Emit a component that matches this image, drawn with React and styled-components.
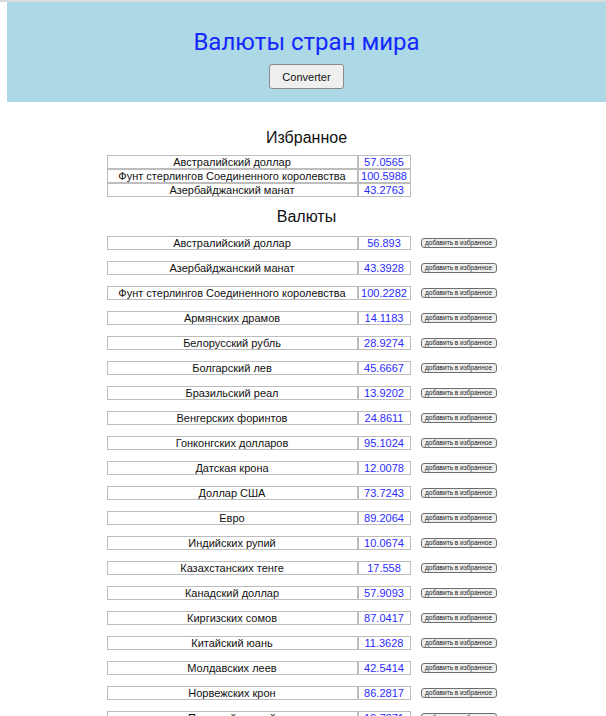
import React from "react";
import styled, { createGlobalStyle } from "styled-components";

const GlobalStyle = createGlobalStyle`
  html, body {
    margin: 0;
    background: #fff;
  }
  body {
    border-top: 2px solid #dcdcdc;
    padding-left: 7px;
    font-family: "Liberation Sans", Arial, sans-serif;
  }
`;

const Header = styled.header`
  background-color: #add8e6;
  height: 100px;
  padding-top: 26px;
  box-sizing: border-box;
  display: flex;
  flex-direction: column;
  align-items: center;
`;

const Title = styled.h1`
  margin: 0;
  font-family: Roboto, "Liberation Sans", sans-serif;
  font-weight: 400;
  font-size: 24px;
  line-height: 28px;
  color: #1428ff;
`;

const ConverterButton = styled.button`
  margin-top: 8px;
  width: 75px;
  height: 25px;
  font-family: "Liberation Sans", Arial, sans-serif;
  font-size: 11px;
  color: #111;
  background: #efefef;
  border: 1px solid #8a8a8a;
  border-radius: 3px;
  padding: 0;
`;

const Main = styled.main`
  display: flex;
  flex-direction: column;
  align-items: center;
  padding-top: 26px;
`;

const Heading = styled.h2`
  margin: ${(p) => (p.$first ? "0 0 7px" : "10px 0 9px")};
  font-weight: 400;
  font-size: 16px;
  line-height: 20px;
  color: #111;
`;

const Column = styled.div`
  width: 400px;
`;

const Table = styled.table`
  border-collapse: separate;
  border-spacing: 0;
  font-size: 11px;
`;

const NameCell = styled.td`
  width: 249px;
  height: 12px;
  padding: 0;
  border: 1px solid #bdbdbd;
  text-align: center;
  line-height: 12px;
  color: #111;
`;

const ValueCell = styled.td`
  width: 51px;
  height: 12px;
  padding: 0;
  border: 1px solid #bdbdbd;
  text-align: center;
  line-height: 12px;
  color: #2a2aff;
`;

const CurrencyRow = styled.div`
  display: flex;
  align-items: center;
  gap: 10px;
  margin-bottom: 11px;
`;

const AddButton = styled.button`
  width: 76px;
  height: 10px;
  padding: 0;
  font-family: "Liberation Sans", Arial, sans-serif;
  font-size: 6.5px;
  line-height: 8px;
  color: #222;
  background: #efefef;
  border: 1px solid #6e6e6e;
  border-radius: 3px;
  white-space: nowrap;
  overflow: hidden;
`;

const favorites = [
  ["Австралийский доллар", "57.0565"],
  ["Фунт стерлингов Соединенного королевства", "100.5988"],
  ["Азербайджанский манат", "43.2763"],
];

const currencies = [
  ["Австралийский доллар", "56.893"],
  ["Азербайджанский манат", "43.3928"],
  ["Фунт стерлингов Соединенного королевства", "100.2282"],
  ["Армянских драмов", "14.1183"],
  ["Белорусский рубль", "28.9274"],
  ["Болгарский лев", "45.6667"],
  ["Бразильский реал", "13.9202"],
  ["Венгерских форинтов", "24.8611"],
  ["Гонконгских долларов", "95.1024"],
  ["Датская крона", "12.0078"],
  ["Доллар США", "73.7243"],
  ["Евро", "89.2064"],
  ["Индийских рупий", "10.0674"],
  ["Казахстанских тенге", "17.558"],
  ["Канадский доллар", "57.9093"],
  ["Киргизских сомов", "87.0417"],
  ["Китайский юань", "11.3628"],
  ["Молдавских леев", "42.5414"],
  ["Норвежских крон", "86.2817"],
  ["Польский злотый", "19.7871"],
  ["Румынский лей", "18.0536"],
  ["СДР (специальные права заимствования)", "105.0719"],
];

export default function App() {
  return (
    <>
      <GlobalStyle />
      <Header>
        <Title>Валюты стран мира</Title>
        <ConverterButton>Converter</ConverterButton>
      </Header>
      <Main>
        <Heading $first>Избранное</Heading>
        <Column>
          <Table>
            <tbody>
              {favorites.map(([name, value]) => (
                <tr key={name}>
                  <NameCell>{name}</NameCell>
                  <ValueCell>{value}</ValueCell>
                </tr>
              ))}
            </tbody>
          </Table>
        </Column>
        <Heading>Валюты</Heading>
        <Column>
          {currencies.map(([name, value]) => (
            <CurrencyRow key={name}>
              <Table>
                <tbody>
                  <tr>
                    <NameCell>{name}</NameCell>
                    <ValueCell>{value}</ValueCell>
                  </tr>
                </tbody>
              </Table>
              <AddButton>добавить в избранное</AddButton>
            </CurrencyRow>
          ))}
        </Column>
      </Main>
    </>
  );
}
